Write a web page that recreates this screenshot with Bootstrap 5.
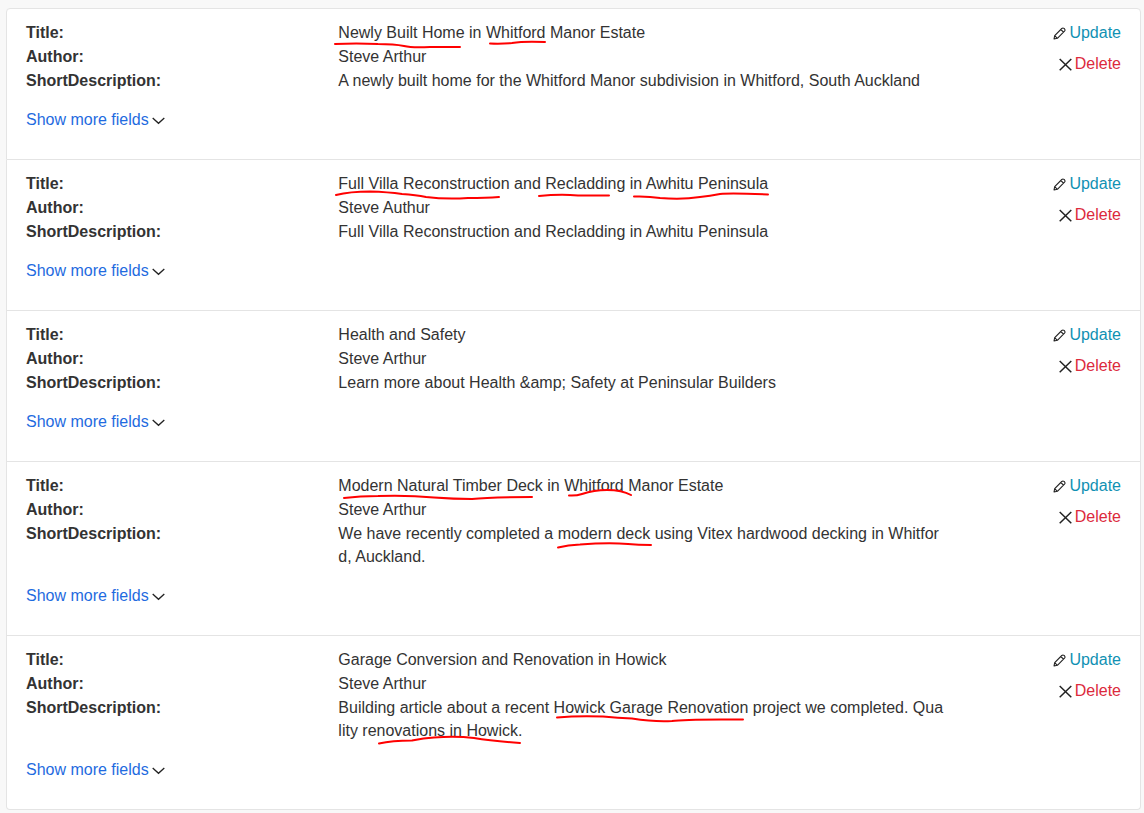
<!DOCTYPE html>
<html lang="en">
<head>
<meta charset="utf-8">
<meta name="viewport" content="width=device-width, initial-scale=1">
<title>Articles</title>
<link href="https://cdn.jsdelivr.net/npm/bootstrap@5.3.0/dist/css/bootstrap.min.css" rel="stylesheet">
<style>
  body { background: #f8f8f8; color: #333; font: 16px/23px "Liberation Sans", Arial, sans-serif; padding: 8px 3px 4px 6px; }
  .entries { --bs-list-group-border-color: #e4e4e4; --bs-list-group-color: #333; --bs-list-group-border-radius: 4px; }
  .entries .entry { padding: 12px 19px 28px; }
  .fields { display: grid; grid-template-columns: 1fr 2fr; row-gap: 1px; margin: 0 158px 16px 0; }
  .fields dt, .fields dd { margin: 0; }
  .fields dd { position: relative; padding-right: 18px; word-break: break-all; }
  .marks { position: absolute; left: 0; top: 1px; width: 1px; height: 1px; overflow: visible; fill: none; stroke: #f00; stroke-width: 2; stroke-linecap: round; stroke-linejoin: round; pointer-events: none; }
  .plain { border: 0; background: none; padding: 0; line-height: 23px; display: flex; align-items: center; gap: 3px; }
  .actions { position: absolute; top: 12px; right: 19px; }
  .more { color: #1f6be0; }
  .update { color: #1191b3; }
  .delete { color: #dc2a3c; }
  .glyph { width: 13px; height: 13px; fill: none; stroke: #222; flex: none; position: relative; top: 1px; }
</style>
</head>
<body>
<svg class="d-none">
  <symbol id="pencil" viewBox="0 0 13 13"><path d="M1 12 1.7 8.6 8.8 1.5Q9.9.5 11 1.4L11.6 2Q12.5 3.1 11.5 4.2L4.4 11.3ZM1.7 8.6 4.4 11.3M7.8 2.5l2.7 2.7" stroke-width="1.1" stroke-linejoin="round"/></symbol>
  <symbol id="cross" viewBox="0 0 13 13"><path d="M.7 1 12.3 12.2M12.3 1 .7 12.2" stroke-width="1.5"/></symbol>
  <symbol id="chevron" viewBox="0 0 13 13"><path d="M.7 4 6.500 9.300 12.300 4" stroke-width="1.3"/></symbol>
</svg>
<main class="list-group entries">
  <article class="list-group-item entry">
    <dl class="fields">
      <dt>Title:</dt>
      <dd>Newly Built Home in Whitford Manor Estate
        <svg class="marks" aria-hidden="true"><path d="M-3 22Q18 21 40 22 56 22 66 24 74 26 92 25L122 25M152 21.500Q164 22 174 21 186 19 207 20"/></svg></dd>
      <dt>Author:</dt><dd>Steve Arthur</dd>
      <dt>ShortDescription:</dt><dd>A newly built home for the Whitford Manor subdivision in Whitford, South Auckland</dd>
    </dl>
    <button type="button" class="plain more">Show more fields <svg class="glyph" aria-hidden="true"><use href="#chevron"/></svg></button>
    <div class="actions d-flex flex-column align-items-end gap-2">
      <button type="button" class="plain update"><svg class="glyph" aria-hidden="true"><use href="#pencil"/></svg>Update</button>
      <button type="button" class="plain delete"><svg class="glyph" aria-hidden="true"><use href="#cross"/></svg>Delete</button>
    </div>
  </article>
  <article class="list-group-item entry">
    <dl class="fields">
      <dt>Title:</dt>
      <dd>Full Villa Reconstruction and Recladding in Awhitu Peninsula
        <svg class="marks" aria-hidden="true"><path d="M-2 22Q12 18.500 32 18.500 50 19 64 21 78 22 88 24 108 26.500 130 25 148 25 161 24M201 23Q222 21 240 22.500L271 22.500M296 23.500Q310 23 322 25 344 27 362 24 372 23 382 21 394 20 430 21.500"/></svg></dd>
      <dt>Author:</dt><dd>Steve Authur</dd>
      <dt>ShortDescription:</dt><dd>Full Villa Reconstruction and Recladding in Awhitu Peninsula</dd>
    </dl>
    <button type="button" class="plain more">Show more fields <svg class="glyph" aria-hidden="true"><use href="#chevron"/></svg></button>
    <div class="actions d-flex flex-column align-items-end gap-2">
      <button type="button" class="plain update"><svg class="glyph" aria-hidden="true"><use href="#pencil"/></svg>Update</button>
      <button type="button" class="plain delete"><svg class="glyph" aria-hidden="true"><use href="#cross"/></svg>Delete</button>
    </div>
  </article>
  <article class="list-group-item entry">
    <dl class="fields">
      <dt>Title:</dt><dd>Health and Safety</dd>
      <dt>Author:</dt><dd>Steve Arthur</dd>
      <dt>ShortDescription:</dt><dd>Learn more about Health &amp;amp; Safety at Peninsular Builders</dd>
    </dl>
    <button type="button" class="plain more">Show more fields <svg class="glyph" aria-hidden="true"><use href="#chevron"/></svg></button>
    <div class="actions d-flex flex-column align-items-end gap-2">
      <button type="button" class="plain update"><svg class="glyph" aria-hidden="true"><use href="#pencil"/></svg>Update</button>
      <button type="button" class="plain delete"><svg class="glyph" aria-hidden="true"><use href="#cross"/></svg>Delete</button>
    </div>
  </article>
  <article class="list-group-item entry">
    <dl class="fields">
      <dt>Title:</dt>
      <dd>Modern Natural Timber Deck in Whitford Manor Estate
        <svg class="marks" aria-hidden="true"><path d="M6 23Q22 21 40 21 70 20 96 22.500 116 24 134 24 150 22 194 22M231 20.500Q238 21 244 19 256 15 269 15 284 15 293 20"/></svg></dd>
      <dt>Author:</dt><dd>Steve Arthur</dd>
      <dt>ShortDescription:</dt>
      <dd>We have recently completed a modern deck using Vitex hardwood decking in Whitford, Auckland.
        <svg class="marks" aria-hidden="true"><path d="M220 24.500Q230 22 242 21.500 270 19.500 290 21 300 22 313 22"/></svg></dd>
    </dl>
    <button type="button" class="plain more">Show more fields <svg class="glyph" aria-hidden="true"><use href="#chevron"/></svg></button>
    <div class="actions d-flex flex-column align-items-end gap-2">
      <button type="button" class="plain update"><svg class="glyph" aria-hidden="true"><use href="#pencil"/></svg>Update</button>
      <button type="button" class="plain delete"><svg class="glyph" aria-hidden="true"><use href="#cross"/></svg>Delete</button>
    </div>
  </article>
  <article class="list-group-item entry">
    <dl class="fields">
      <dt>Title:</dt><dd>Garage Conversion and Renovation in Howick</dd>
      <dt>Author:</dt><dd>Steve Arthur</dd>
      <dt>ShortDescription:</dt>
      <dd>Building article about a recent Howick Garage Renovation project we completed. Quality renovations in Howick.
        <svg class="marks" aria-hidden="true"><path d="M219 20.500Q240 18.500 265 19.500 280 21 294 21.500 316 25 334 24 346 22 405 22.500M41 46.500Q54 43.500 74 43.500 86 41 96 40.500 118 39 136 41 154 44 182 46"/></svg></dd>
    </dl>
    <button type="button" class="plain more">Show more fields <svg class="glyph" aria-hidden="true"><use href="#chevron"/></svg></button>
    <div class="actions d-flex flex-column align-items-end gap-2">
      <button type="button" class="plain update"><svg class="glyph" aria-hidden="true"><use href="#pencil"/></svg>Update</button>
      <button type="button" class="plain delete"><svg class="glyph" aria-hidden="true"><use href="#cross"/></svg>Delete</button>
    </div>
  </article>
</main>
<script src="https://cdn.jsdelivr.net/npm/bootstrap@5.3.0/dist/js/bootstrap.bundle.min.js"></script>
</body>
</html>
